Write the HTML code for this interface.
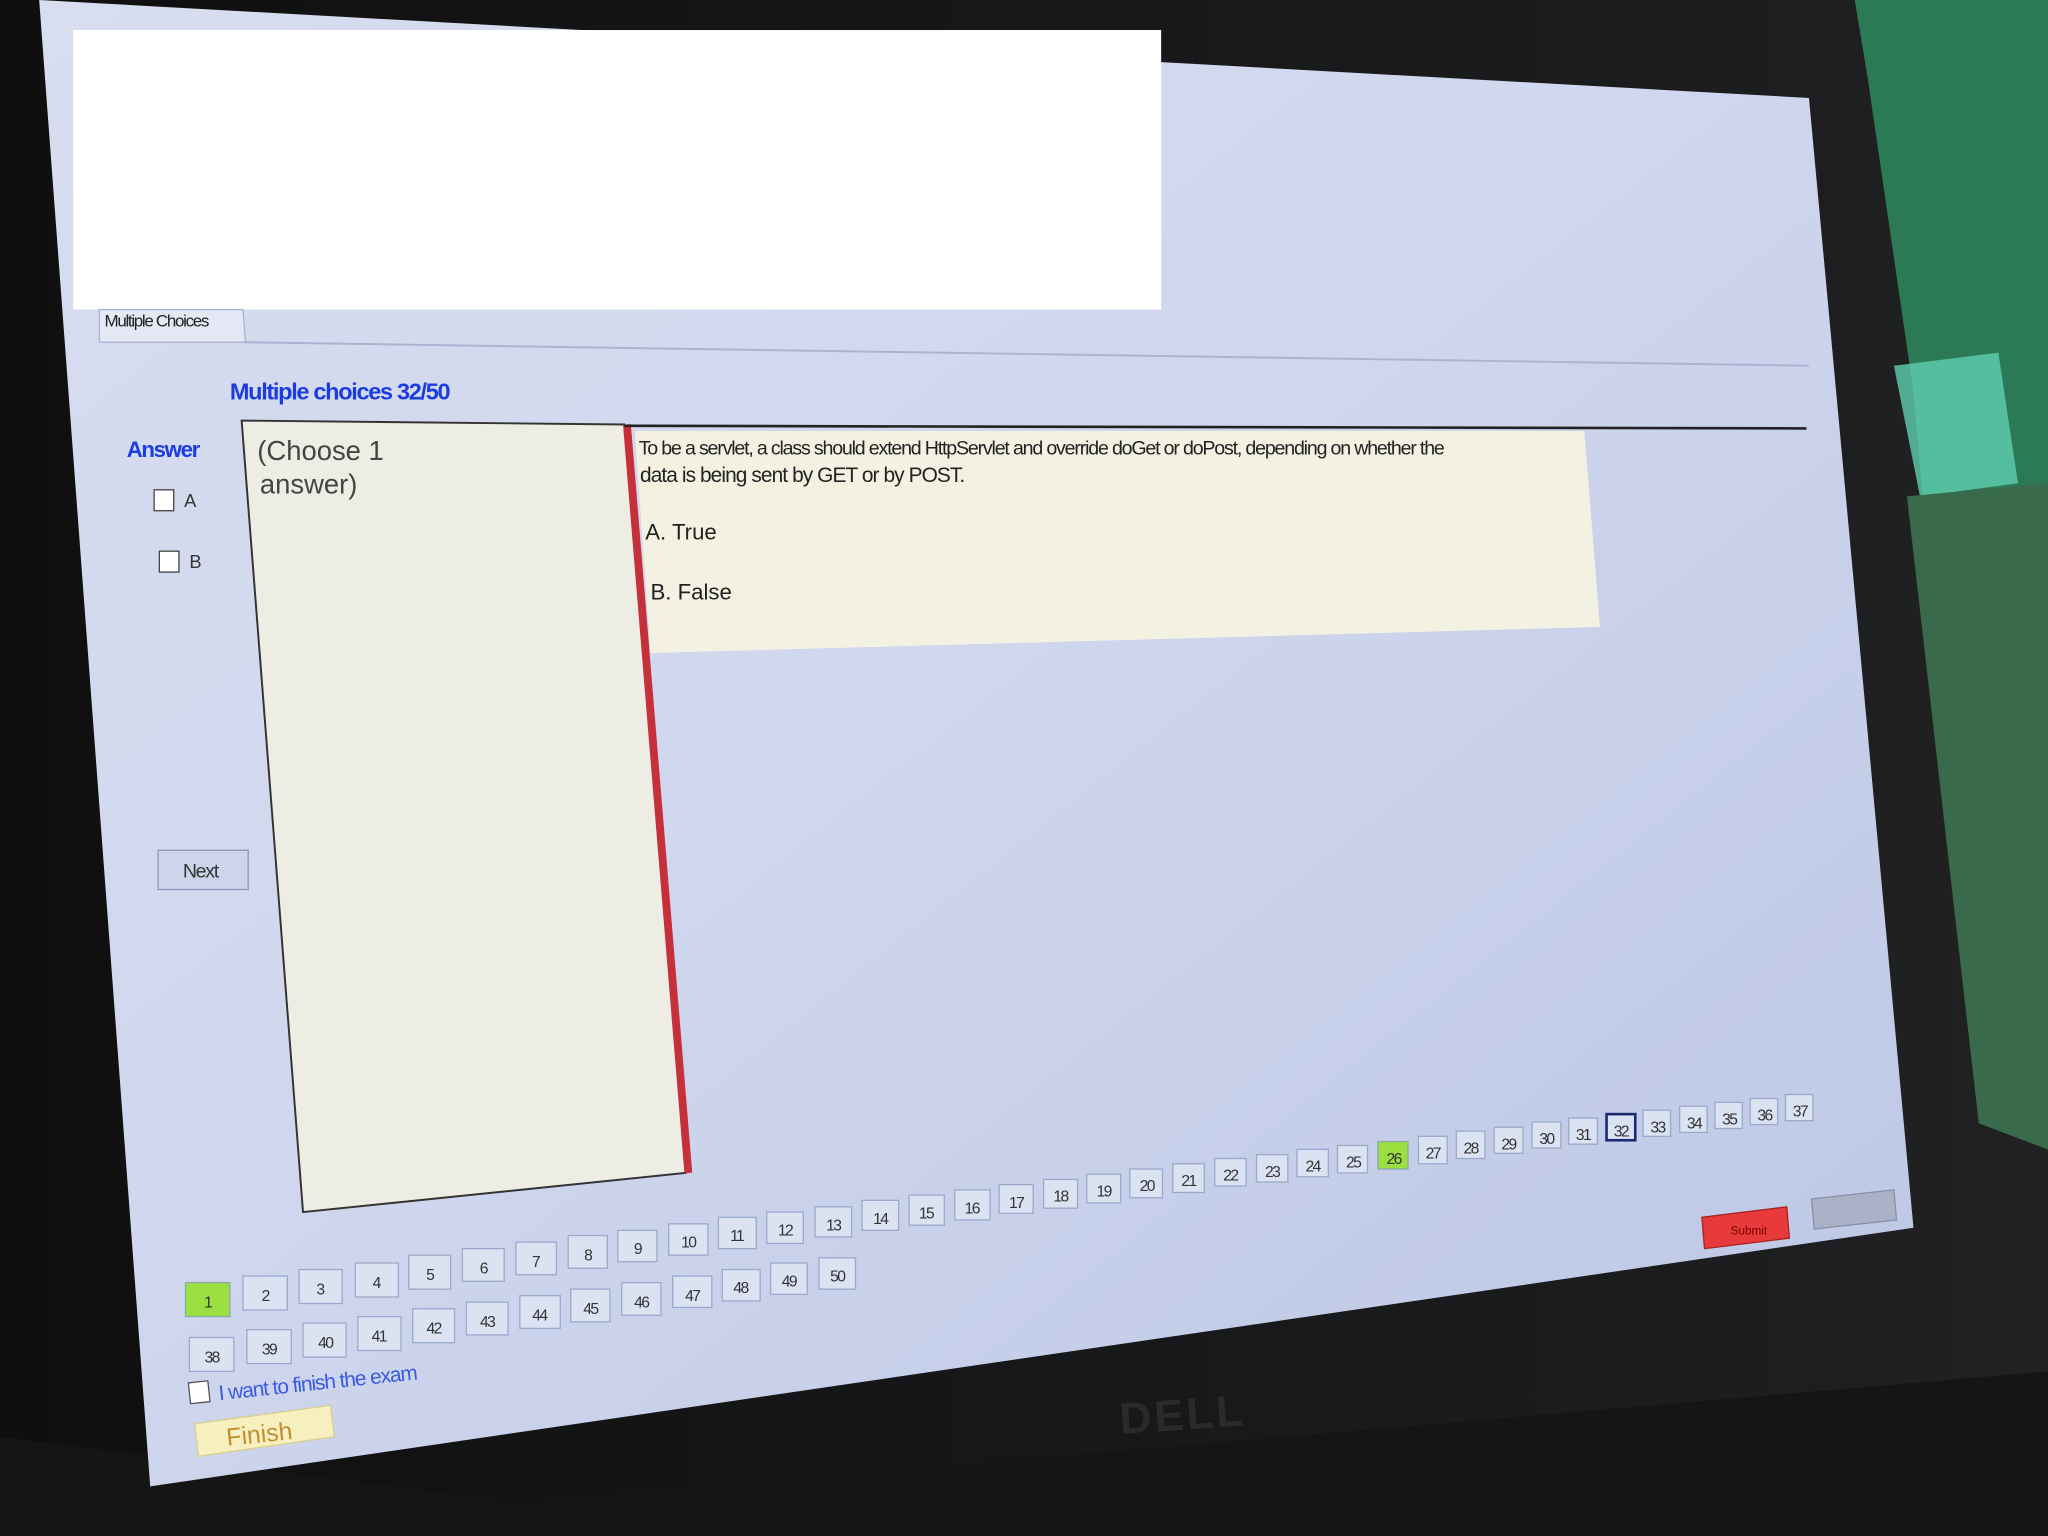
<!DOCTYPE html>
<html><head><meta charset="utf-8"><style>
html,body{margin:0;padding:0;background:#111;}
svg{display:block;}
text{font-family:"Liberation Sans",sans-serif;}
</style></head><body>
<svg width="2048" height="1536" viewBox="0 0 1568 1176" xmlns="http://www.w3.org/2000/svg">
<defs>
<linearGradient id="scr" x1="0" y1="0" x2="1" y2="1">
<stop offset="0" stop-color="#d8ddef"/><stop offset="0.45" stop-color="#d0d7ee"/><stop offset="1" stop-color="#bcc6e4"/>
</linearGradient>
<linearGradient id="bg" x1="0" y1="0" x2="1" y2="0">
<stop offset="0" stop-color="#0f0f10"/><stop offset="0.85" stop-color="#1c1d1f"/><stop offset="1" stop-color="#222"/>
</linearGradient>
</defs>
<rect width="1568" height="1176" fill="url(#bg)"/>
<polygon points="1420,0 1568,0 1568,880 1515,860 1465,300 1430,60" fill="#2b7a55"/>
<polygon points="1450,280 1530,270 1545,370 1470,380" fill="#5fd0b0" opacity="0.8"/>
<polygon points="1460,380 1568,370 1568,880 1515,860" fill="#3a6a4c"/>
<polygon points="0,1100 400,1150 1568,1050 1568,1176 0,1176" fill="#151515"/>
<!-- screen -->
<polygon points="30,0 1385,75 1465,940 115,1138" fill="url(#scr)"/>
<rect x="56" y="23" width="833" height="214" fill="#ffffff"/>
<polygon points="76,237 186,237 188,262 76,262" fill="#e4e8f4" stroke="#aab4d0"/>
<text x="80" y="250" font-size="13" fill="#222" letter-spacing="-1">Multiple Choices</text>
<line x1="186" y1="262" x2="1385" y2="280" stroke="#aab4d0" stroke-width="1.5"/>
<text x="176" y="306" font-size="18" font-weight="bold" fill="#1a3ce0" letter-spacing="-1">Multiple choices 32/50</text>
<text x="97" y="350" font-size="17" font-weight="bold" fill="#1a3ce0" letter-spacing="-1">Answer</text>
<rect x="118" y="375" width="15" height="16" fill="#fff" stroke="#444"/>
<text x="141" y="388" font-size="14" fill="#333">A</text>
<rect x="122" y="422" width="15" height="16" fill="#fff" stroke="#444"/>
<text x="145" y="435" font-size="14" fill="#333">B</text>
<polygon points="185,322 478,325 525,898 232,928" fill="#eeede4" stroke="#333" stroke-width="1.5"/>
<text x="197" y="352" font-size="21" fill="#444">(Choose 1</text>
<text x="199" y="378" font-size="21" fill="#444">answer)</text>
<line x1="480" y1="325" x2="527" y2="898" stroke="#c6303a" stroke-width="6"/>
<polygon points="486,330 1213,330 1225,480 498,500" fill="#f3f1e2"/>
<line x1="478" y1="326" x2="1383" y2="328" stroke="#222" stroke-width="2"/>
<text x="489" y="348" font-size="15" fill="#222" letter-spacing="-0.9">To be a servlet, a class should extend HttpServlet and override doGet or doPost, depending on whether the</text>
<text x="490" y="369" font-size="16" fill="#222" letter-spacing="-0.7">data is being sent by GET or by POST.</text>
<text x="494" y="413" font-size="17" fill="#222">A.  True</text>
<text x="498" y="459" font-size="17" fill="#222">B.  False</text>
<rect x="121" y="651" width="69" height="30" fill="#cdd5ec" stroke="#8a96b8"/>
<text x="140" y="672" font-size="15" fill="#333" letter-spacing="-1">Next</text>
<g font-size="12" text-anchor="middle" letter-spacing="-1.2">
<rect x="142" y="982" width="34" height="26" fill="#9be040" stroke="#8aa"/><text x="159" y="1001" fill="#333">1</text>
<rect x="186" y="977" width="34" height="26" fill="#dbe2f2" stroke="#9aaacc"/><text x="203" y="996" fill="#333">2</text>
<rect x="229" y="972" width="33" height="26" fill="#dbe2f2" stroke="#9aaacc"/><text x="245" y="991" fill="#333">3</text>
<rect x="272" y="967" width="33" height="26" fill="#dbe2f2" stroke="#9aaacc"/><text x="288" y="986" fill="#333">4</text>
<rect x="313" y="961" width="32" height="26" fill="#dbe2f2" stroke="#9aaacc"/><text x="329" y="980" fill="#333">5</text>
<rect x="354" y="956" width="32" height="25" fill="#dbe2f2" stroke="#9aaacc"/><text x="370" y="975" fill="#333">6</text>
<rect x="395" y="951" width="31" height="25" fill="#dbe2f2" stroke="#9aaacc"/><text x="410" y="970" fill="#333">7</text>
<rect x="435" y="946" width="30" height="25" fill="#dbe2f2" stroke="#9aaacc"/><text x="450" y="965" fill="#333">8</text>
<rect x="473" y="942" width="30" height="24" fill="#dbe2f2" stroke="#9aaacc"/><text x="488" y="960" fill="#333">9</text>
<rect x="512" y="937" width="30" height="24" fill="#dbe2f2" stroke="#9aaacc"/><text x="527" y="955" fill="#333">10</text>
<rect x="550" y="932" width="29" height="24" fill="#dbe2f2" stroke="#9aaacc"/><text x="564" y="950" fill="#333">11</text>
<rect x="587" y="928" width="28" height="24" fill="#dbe2f2" stroke="#9aaacc"/><text x="601" y="946" fill="#333">12</text>
<rect x="624" y="924" width="28" height="23" fill="#dbe2f2" stroke="#9aaacc"/><text x="638" y="942" fill="#333">13</text>
<rect x="660" y="919" width="28" height="23" fill="#dbe2f2" stroke="#9aaacc"/><text x="674" y="937" fill="#333">14</text>
<rect x="696" y="915" width="27" height="23" fill="#dbe2f2" stroke="#9aaacc"/><text x="709" y="933" fill="#333">15</text>
<rect x="731" y="911" width="27" height="23" fill="#dbe2f2" stroke="#9aaacc"/><text x="744" y="929" fill="#333">16</text>
<rect x="765" y="907" width="26" height="22" fill="#dbe2f2" stroke="#9aaacc"/><text x="778" y="925" fill="#333">17</text>
<rect x="799" y="903" width="26" height="22" fill="#dbe2f2" stroke="#9aaacc"/><text x="812" y="920" fill="#333">18</text>
<rect x="832" y="899" width="26" height="22" fill="#dbe2f2" stroke="#9aaacc"/><text x="845" y="916" fill="#333">19</text>
<rect x="865" y="895" width="25" height="22" fill="#dbe2f2" stroke="#9aaacc"/><text x="878" y="912" fill="#333">20</text>
<rect x="898" y="891" width="24" height="22" fill="#dbe2f2" stroke="#9aaacc"/><text x="910" y="908" fill="#333">21</text>
<rect x="930" y="887" width="24" height="21" fill="#dbe2f2" stroke="#9aaacc"/><text x="942" y="904" fill="#333">22</text>
<rect x="962" y="884" width="24" height="21" fill="#dbe2f2" stroke="#9aaacc"/><text x="974" y="901" fill="#333">23</text>
<rect x="993" y="880" width="24" height="21" fill="#dbe2f2" stroke="#9aaacc"/><text x="1005" y="897" fill="#333">24</text>
<rect x="1024" y="877" width="23" height="21" fill="#dbe2f2" stroke="#9aaacc"/><text x="1036" y="894" fill="#333">25</text>
<rect x="1055" y="874" width="23" height="21" fill="#9be040" stroke="#8aa"/><text x="1067" y="891" fill="#333">26</text>
<rect x="1086" y="870" width="22" height="21" fill="#dbe2f2" stroke="#9aaacc"/><text x="1097" y="887" fill="#333">27</text>
<rect x="1115" y="866" width="22" height="21" fill="#dbe2f2" stroke="#9aaacc"/><text x="1126" y="883" fill="#333">28</text>
<rect x="1144" y="863" width="22" height="20" fill="#dbe2f2" stroke="#9aaacc"/><text x="1155" y="880" fill="#333">29</text>
<rect x="1173" y="859" width="22" height="20" fill="#dbe2f2" stroke="#9aaacc"/><text x="1184" y="876" fill="#333">30</text>
<rect x="1201" y="856" width="22" height="20" fill="#dbe2f2" stroke="#9aaacc"/><text x="1212" y="873" fill="#333">31</text>
<rect x="1230" y="853" width="22" height="20" fill="#dbe2f2" stroke="#1a2a70" stroke-width="2"/><text x="1241" y="870" fill="#333">32</text>
<rect x="1258" y="850" width="21" height="20" fill="#dbe2f2" stroke="#9aaacc"/><text x="1269" y="867" fill="#333">33</text>
<rect x="1286" y="847" width="21" height="20" fill="#dbe2f2" stroke="#9aaacc"/><text x="1297" y="864" fill="#333">34</text>
<rect x="1313" y="844" width="21" height="20" fill="#dbe2f2" stroke="#9aaacc"/><text x="1324" y="861" fill="#333">35</text>
<rect x="1340" y="841" width="21" height="20" fill="#dbe2f2" stroke="#9aaacc"/><text x="1351" y="858" fill="#333">36</text>
<rect x="1367" y="838" width="21" height="20" fill="#dbe2f2" stroke="#9aaacc"/><text x="1378" y="855" fill="#333">37</text>
<rect x="145" y="1024" width="34" height="26" fill="#dbe2f2" stroke="#9aaacc"/><text x="162" y="1043" fill="#333">38</text>
<rect x="189" y="1018" width="34" height="26" fill="#dbe2f2" stroke="#9aaacc"/><text x="206" y="1037" fill="#333">39</text>
<rect x="232" y="1013" width="33" height="26" fill="#dbe2f2" stroke="#9aaacc"/><text x="249" y="1032" fill="#333">40</text>
<rect x="274" y="1008" width="33" height="26" fill="#dbe2f2" stroke="#9aaacc"/><text x="290" y="1027" fill="#333">41</text>
<rect x="316" y="1002" width="32" height="26" fill="#dbe2f2" stroke="#9aaacc"/><text x="332" y="1021" fill="#333">42</text>
<rect x="357" y="997" width="32" height="25" fill="#dbe2f2" stroke="#9aaacc"/><text x="373" y="1016" fill="#333">43</text>
<rect x="398" y="992" width="31" height="25" fill="#dbe2f2" stroke="#9aaacc"/><text x="413" y="1011" fill="#333">44</text>
<rect x="437" y="987" width="30" height="25" fill="#dbe2f2" stroke="#9aaacc"/><text x="452" y="1006" fill="#333">45</text>
<rect x="476" y="982" width="30" height="25" fill="#dbe2f2" stroke="#9aaacc"/><text x="491" y="1001" fill="#333">46</text>
<rect x="515" y="977" width="30" height="24" fill="#dbe2f2" stroke="#9aaacc"/><text x="530" y="996" fill="#333">47</text>
<rect x="553" y="972" width="29" height="24" fill="#dbe2f2" stroke="#9aaacc"/><text x="567" y="990" fill="#333">48</text>
<rect x="590" y="967" width="28" height="24" fill="#dbe2f2" stroke="#9aaacc"/><text x="604" y="985" fill="#333">49</text>
<rect x="627" y="963" width="28" height="24" fill="#dbe2f2" stroke="#9aaacc"/><text x="641" y="981" fill="#333">50</text>
</g>
<polygon points="1303,932 1368,924 1370,948 1305,956" fill="#e83a3a" stroke="#a22"/>
<text x="1325" y="945" font-size="9" fill="#700">Submit</text>
<polygon points="1387,918 1450,911 1452,934 1389,941" fill="#aab2c8" stroke="#8890a8"/>
<rect x="145" y="1058" width="15" height="16" fill="#fff" stroke="#555" transform="rotate(-6 152 1066)"/>
<text x="168" y="1072" font-size="16" fill="#3a5ae0" transform="rotate(-6 168 1072)" letter-spacing="-0.8">I want to finish the exam</text>
<polygon points="149,1090 253,1076 256,1100 152,1115" fill="#f6efbe" stroke="#d8cf90"/>
<text x="174" y="1107" font-size="19" fill="#c09030" transform="rotate(-6 174 1107)">Finish</text>
<text x="858" y="1098" font-size="34" font-weight="bold" fill="#2a2a2c" transform="rotate(-4 858 1098)" letter-spacing="2">DELL</text>
</svg>
</body></html>
